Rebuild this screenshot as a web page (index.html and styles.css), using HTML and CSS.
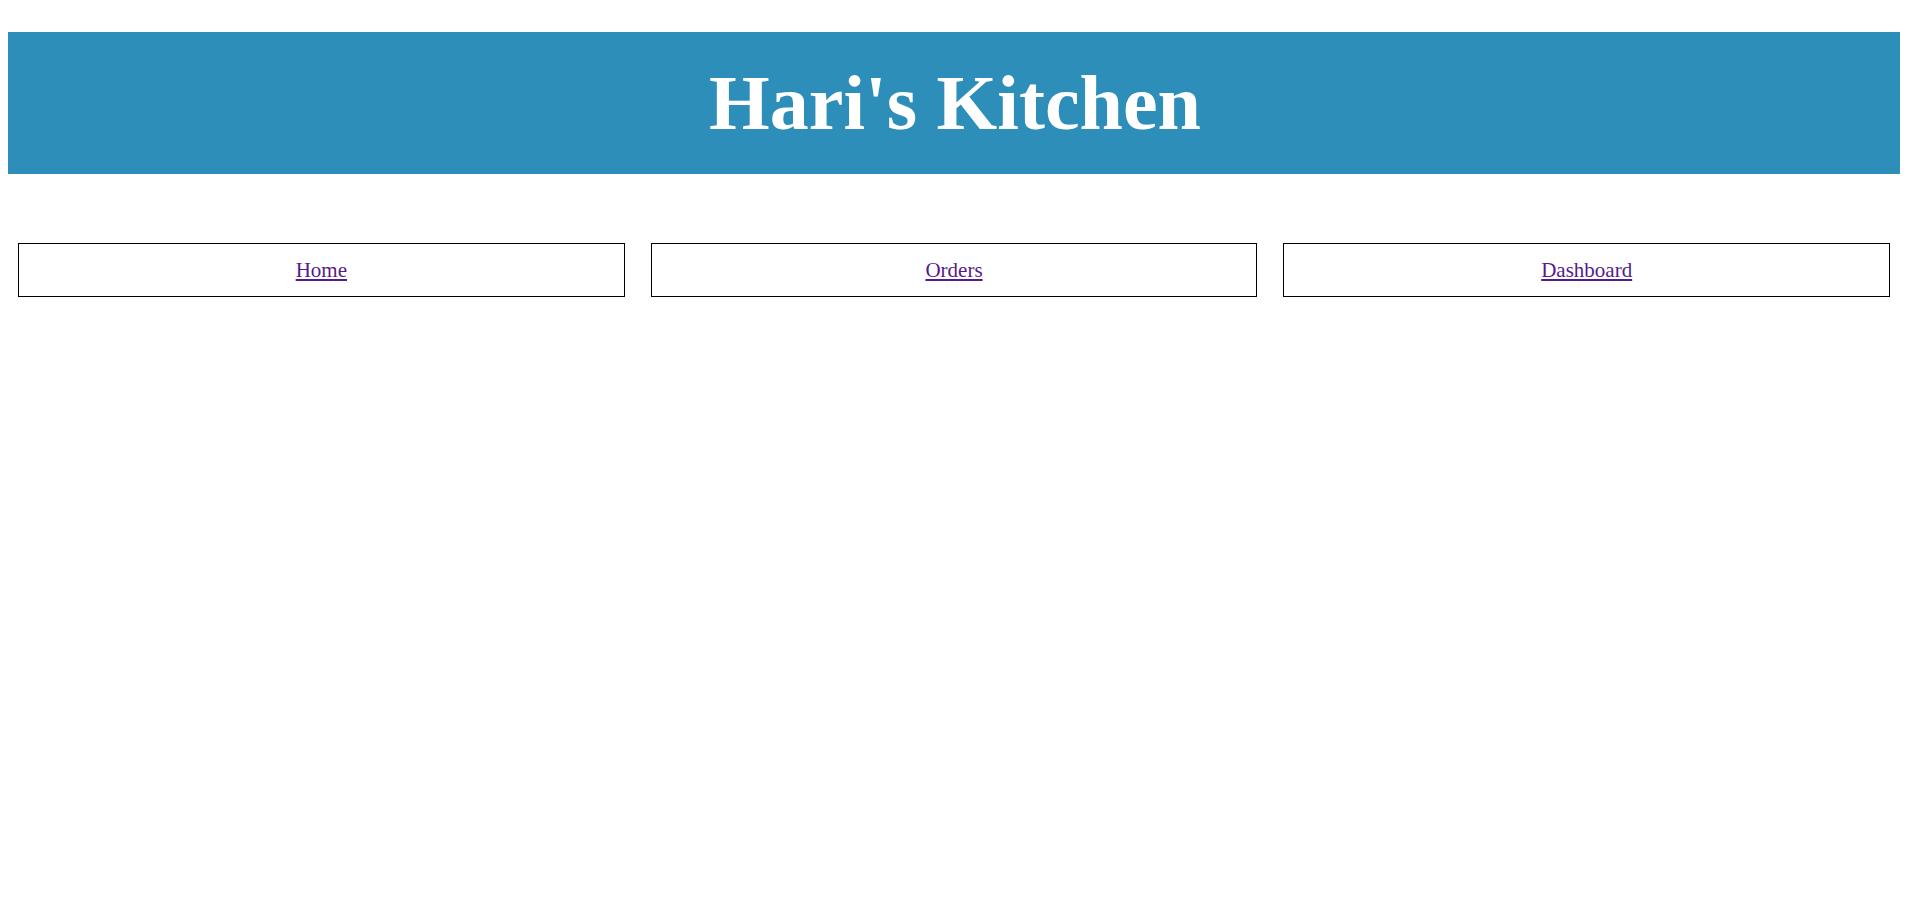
FILE: index.html
```html
<!DOCTYPE html>
<html>
<head>
<meta charset="utf-8">
<title>Hari's Kitchen</title>
<link rel="stylesheet" href="styles.css">
</head>
<body>
<header class="banner">
  <h1 class="title">Hari's Kitchen</h1>
</header>
<nav class="nav">
  <div class="nav-item"><a class="nav-link" href="#">Home</a></div>
  <div class="nav-item"><a class="nav-link" href="#">Orders</a></div>
  <div class="nav-item"><a class="nav-link" href="#">Dashboard</a></div>
</nav>
</body>
</html>
```
FILE: styles.css
```css
html, body {
  background: #ffffff;
}
body {
  margin: 8px;
  font-family: "Liberation Serif", "Times New Roman", serif;
}
.banner {
  margin-top: 24px;
  width: calc(100% + 2px);
  height: 142px;
  background: #2d8fb9;
  padding-top: 26px;
  box-sizing: border-box;
}
.title {
  margin: 0;
  text-align: center;
  color: #ffffff;
  font-size: 78px;
  line-height: 90px;
  font-weight: bold;
}
.nav {
  margin-top: 69px;
  padding: 0 10px;
  display: flex;
  gap: 26px;
}
.nav-item {
  flex: 1;
  border: 1px solid #000;
  padding: 14px 0;
  text-align: center;
  font-size: 21px;
  line-height: 24px;
}
.nav-link {
  color: #551a8b;
}
```
